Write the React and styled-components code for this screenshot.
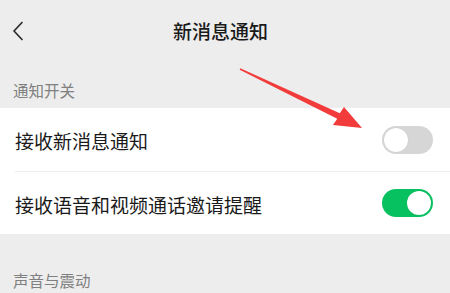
import React from "react";
import styled, { createGlobalStyle } from "styled-components";

const Global = createGlobalStyle`
  html, body {
    margin: 0;
    padding: 0;
    background: #ededed;
  }
  body {
    font-family: "Noto Sans CJK SC", "Noto Sans", sans-serif;
    -webkit-font-smoothing: antialiased;
  }
`;

function App() {
  return (
    <Page>
      <Global />
      <Header>
        <Back aria-label="back">
          <svg width="12" height="20" viewBox="0 0 12 20">
            <path d="M10 1.5 L2 10 L10 18.5" fill="none" stroke="#2b2b2b" strokeWidth="1.7" strokeLinecap="round" strokeLinejoin="round" />
          </svg>
        </Back>
        <Title>新消息通知</Title>
        <Spacer />
      </Header>

      <SectionLabel $top={18}>通知开关</SectionLabel>
      <Panel>
        <Row>
          <RowText>接收新消息通知</RowText>
          <Toggle $on={false} />
        </Row>
        <Row $divider>
          <RowText>接收语音和视频通话邀请提醒</RowText>
          <Toggle $on />
        </Row>
      </Panel>
      <SectionLabel $top={36}>声音与震动</SectionLabel>

      <Arrow width="450" height="293" viewBox="0 0 450 293">
        <polygon
          points="240.3,68.2 339.8,113.3 344,107 362,128 333,125 337.2,118.7 239.7,69.8"
          fill="#f23c3c"
        />
      </Arrow>
    </Page>
  );
}

const Page = styled.div`
  position: relative;
  width: 450px;
  height: 293px;
  overflow: hidden;
  background: #ededed;
`;

const Header = styled.header`
  height: 62px;
  display: flex;
  align-items: center;
`;

const Back = styled.div`
  width: 40px;
  padding-left: 12px;
  box-sizing: border-box;
  display: flex;
  align-items: center;
  svg {
    display: block;
  }
`;

const Title = styled.div`
  flex: 1;
  text-align: center;
  font-size: 19px;
  font-weight: 500;
  color: #1a1a1a;
  line-height: 24px;
`;

const Spacer = styled.div`
  width: 49px;
`;

const SectionLabel = styled.div`
  padding: ${(p) => p.$top}px 13px 0;
  font-size: 15.5px;
  line-height: 20px;
  color: #808080;
  height: 46px;
  box-sizing: border-box;
`;

const Panel = styled.section`
  background: #ffffff;
`;

const Row = styled.div`
  height: 63px;
  margin-left: 15px;
  padding-right: 17px;
  display: flex;
  align-items: center;
  justify-content: space-between;
  border-top: ${(p) => (p.$divider ? "1px solid #ececec" : "none")};
  box-sizing: border-box;
`;

const RowText = styled.span`
  font-size: 19px;
  line-height: 24px;
  color: #1a1a1a;
  padding-top: 3px;
`;

const Toggle = styled.span`
  position: relative;
  width: 51px;
  height: 28px;
  border-radius: 14px;
  background: ${(p) => (p.$on ? "#07c160" : "#d6d6d6")};
  flex-shrink: 0;
  &::after {
    content: "";
    position: absolute;
    top: 2px;
    left: ${(p) => (p.$on ? "25px" : "2px")};
    width: 24px;
    height: 24px;
    border-radius: 50%;
    background: #ffffff;
    box-shadow: 0 0 1px rgba(0, 0, 0, 0.15);
  }
`;

const Arrow = styled.svg`
  position: absolute;
  left: 0;
  top: 0;
  pointer-events: none;
`;

export default App;
